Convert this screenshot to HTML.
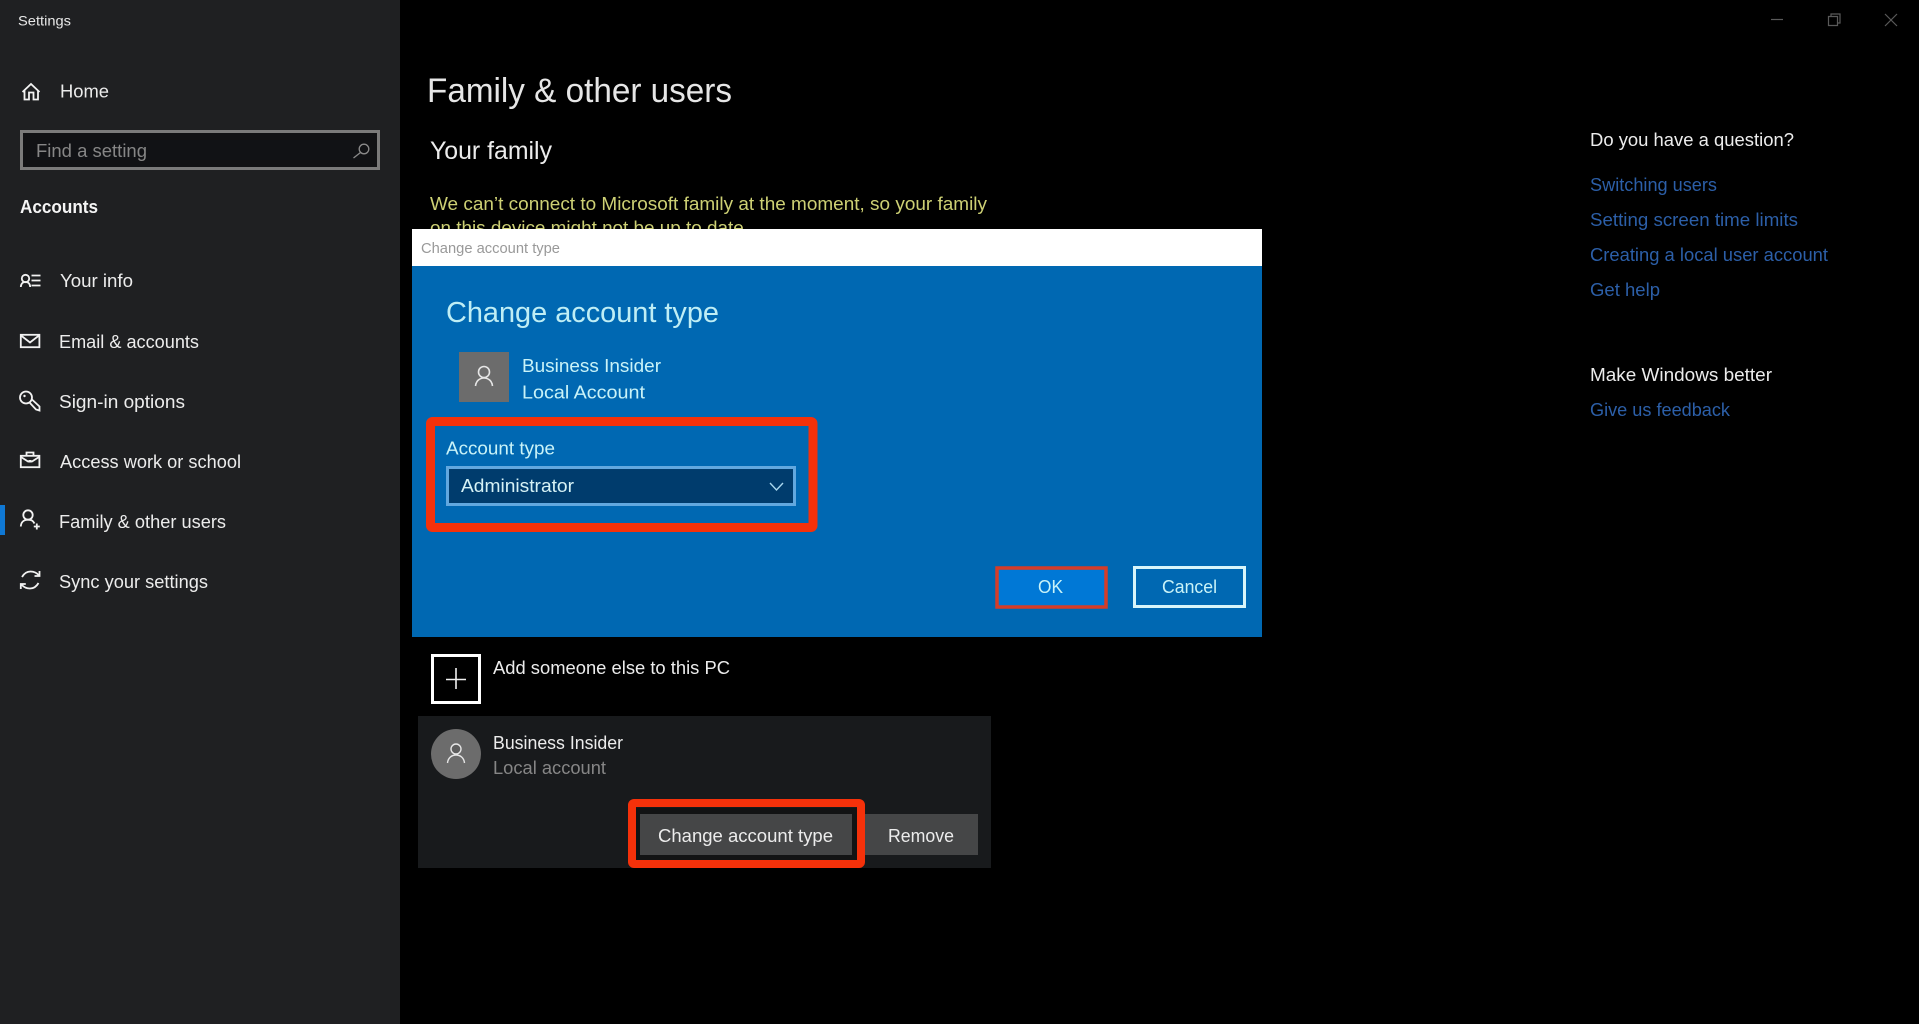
<!DOCTYPE html>
<html lang="en"><head><meta charset="utf-8"><title>Settings</title>
<style>
html,body{margin:0;padding:0;background:#000;width:1919px;height:1024px;overflow:hidden}
svg{display:block}
text{font-family:"Liberation Sans",sans-serif;white-space:pre}
.s{fill:none;stroke:#f2f2f2;stroke-width:1.8}
</style></head><body>
<svg xmlns="http://www.w3.org/2000/svg" width="1919" height="1024" viewBox="0 0 1919 1024">
<rect width="1919" height="1024" fill="#000"/>
<rect width="400" height="1024" fill="#1f2022"/>
<text x="18" y="25.500" font-size="14" fill="#e8e8e8" textLength="53" lengthAdjust="spacingAndGlyphs">Settings</text>

<!-- home -->
<path class="s" d="M22.500 92L31 84L39.500 92M24.500 90.500V99.500H29V92.500H33.500V99.500H38V90.500"/>
<text x="60" y="97.500" font-size="18.500" fill="#ececec" textLength="49" lengthAdjust="spacingAndGlyphs">Home</text>

<!-- search -->
<rect x="21.500" y="131.500" width="357" height="37" fill="#111215" stroke="#7b7b7b" stroke-width="3"/>
<text x="36" y="157" font-size="18.500" fill="#868686" textLength="111" lengthAdjust="spacingAndGlyphs">Find a setting</text>
<circle cx="364" cy="149" r="4.800" fill="none" stroke="#8a8a8a" stroke-width="1.300"/>
<path d="M360.500 152.500L353.500 158" fill="none" stroke="#8a8a8a" stroke-width="1.300"/>

<text x="20" y="213" font-size="18.500" font-weight="bold" fill="#f5f5f5" textLength="78" lengthAdjust="spacingAndGlyphs">Accounts</text>

<!-- your info -->
<circle cx="25.500" cy="278.500" r="3.700" class="s"/>
<path class="s" d="M20.800 287C21 283.500 23 282 25.500 282S30 283.500 30.200 287M31.500 275.500H40.500M31.500 280.500H40.500M31.500 285.500H40.500"/>
<text x="60" y="287" font-size="18.500" fill="#ececec" textLength="73" lengthAdjust="spacingAndGlyphs">Your info</text>

<!-- mail -->
<rect x="20.800" y="334.800" width="18.600" height="12.400" class="s"/>
<path class="s" d="M21 335.500L30 342.500L39 335.500"/>
<text x="59" y="348" font-size="18.500" fill="#ececec" textLength="140" lengthAdjust="spacingAndGlyphs">Email &amp; accounts</text>

<!-- key -->
<circle cx="26" cy="397.500" r="6" class="s"/>
<circle cx="24.500" cy="396" r="1.200" fill="#f2f2f2"/>
<path class="s" d="M29.500 402.500L36 409.500L39.500 410.500L39.500 406.500L32 399.500"/>
<text x="59" y="408" font-size="18.500" fill="#ececec" textLength="126" lengthAdjust="spacingAndGlyphs">Sign-in options</text>

<!-- briefcase -->
<rect x="20.800" y="455.800" width="18.600" height="11.400" class="s"/>
<path class="s" d="M26.500 455.500V452.500H33.500V455.500M21 457L28 461.500H32L39 457"/>
<rect x="28.500" y="460" width="3" height="2.500" fill="#f2f2f2"/>
<text x="60" y="468" font-size="18.500" fill="#ececec" textLength="181" lengthAdjust="spacingAndGlyphs">Access work or school</text>

<!-- family -->
<rect x="0" y="505" width="5" height="30" fill="#0f78d4"/>
<circle cx="28" cy="515" r="4.700" class="s"/>
<path class="s" d="M20.800 526.500C21 522 24 519.700 28 519.700S33 521 34.500 523.500M36.800 523.500V529.500M33.800 526.500H39.800"/>
<text x="59" y="528" font-size="18.500" fill="#ececec" textLength="167" lengthAdjust="spacingAndGlyphs">Family &amp; other users</text>

<!-- sync -->
<path class="s" d="M22 577C24 573.500 27 571.500 30.500 571.500C34 571.500 37 573 39 575.500M39.500 571V576H34.500"/>
<path class="s" d="M38.500 583C36.500 586.500 33.500 588.500 30 588.500C26.500 588.500 23.500 587 21.500 584.500M20.800 589V584H25.800"/>
<text x="59" y="588" font-size="18.500" fill="#ececec" textLength="149" lengthAdjust="spacingAndGlyphs">Sync your settings</text>

<!-- main -->
<text x="427" y="102" font-size="34" fill="#e6e6e6" textLength="305" lengthAdjust="spacingAndGlyphs">Family &amp; other users</text>
<text x="430" y="159" font-size="25" fill="#ececec" textLength="122" lengthAdjust="spacingAndGlyphs">Your family</text>
<text x="430" y="210" font-size="18.500" fill="#cdd074" textLength="557" lengthAdjust="spacingAndGlyphs">We can’t connect to Microsoft family at the moment, so your family</text>
<text x="430" y="234" font-size="18.500" fill="#cdd074" textLength="319" lengthAdjust="spacingAndGlyphs">on this device might not be up to date.</text>

<!-- dialog -->
<rect x="412" y="229" width="850" height="408" fill="#0068b2"/>
<rect x="412" y="229" width="850" height="37" fill="#fff"/>
<text x="421" y="253" font-size="15" fill="#999" textLength="139" lengthAdjust="spacingAndGlyphs">Change account type</text>
<text x="446" y="322" font-size="29" fill="#bfeef5" textLength="273" lengthAdjust="spacingAndGlyphs">Change account type</text>
<rect x="459" y="352" width="50" height="50" fill="#6c6c6c"/>
<circle cx="484" cy="372" r="5.500" fill="none" stroke="#e6e6e6" stroke-width="1.600"/>
<path d="M475.500 386C476 381 479.500 378 484 378S492 381 492.500 386" fill="none" stroke="#e6e6e6" stroke-width="1.600"/>
<text x="522" y="372" font-size="18.500" fill="#c9f3f8" textLength="139" lengthAdjust="spacingAndGlyphs">Business Insider</text>
<text x="522" y="398.500" font-size="18.500" fill="#c9f3f8" textLength="123" lengthAdjust="spacingAndGlyphs">Local Account</text>

<rect x="430.500" y="421.500" width="382.500" height="106" rx="2" fill="none" stroke="#f5310a" stroke-width="9"/>
<text x="446" y="454.500" font-size="18.500" fill="#c9f3f8" textLength="109" lengthAdjust="spacingAndGlyphs">Account type</text>
<rect x="447.500" y="467.500" width="347" height="37" fill="#003c6d" stroke="#62a8df" stroke-width="3"/>
<text x="461" y="492" font-size="18.500" fill="#d6f2f6" textLength="113" lengthAdjust="spacingAndGlyphs">Administrator</text>
<path d="M770 483L776.500 490L783 483" fill="none" stroke="#a9d7ee" stroke-width="1.400"/>

<rect x="997" y="568" width="109" height="39" fill="#0078d6" stroke="#d63c28" stroke-width="3.500"/>
<text x="1038" y="593" font-size="18.500" fill="#c9f3f8" textLength="25" lengthAdjust="spacingAndGlyphs">OK</text>
<rect x="1134.500" y="567.500" width="110" height="39" fill="#0068b2" stroke="#d8f5fa" stroke-width="3"/>
<text x="1162" y="593" font-size="18.500" fill="#c9f3f8" textLength="55" lengthAdjust="spacingAndGlyphs">Cancel</text>

<!-- add -->
<rect x="432.500" y="655.500" width="47" height="47" fill="none" stroke="#fff" stroke-width="3"/>
<path d="M456 668V689M446 679.500H466" stroke="#f0f0f0" stroke-width="1.600" fill="none"/>
<text x="493" y="674" font-size="18.500" fill="#ececec" textLength="237" lengthAdjust="spacingAndGlyphs">Add someone else to this PC</text>

<!-- card -->
<rect x="418" y="716" width="573" height="152" fill="#181a1c"/>
<circle cx="456" cy="754" r="25" fill="#6c6c6c"/>
<circle cx="456" cy="749" r="5" fill="#5e5e5e" stroke="#e6e6e6" stroke-width="1.400"/>
<path d="M447.500 763C448 758 451.500 755 456 755S464 758 464.500 763" fill="none" stroke="#e6e6e6" stroke-width="1.400"/>
<text x="493" y="749" font-size="18.500" fill="#ececec" textLength="130" lengthAdjust="spacingAndGlyphs">Business Insider</text>
<text x="493" y="774" font-size="18.500" fill="#868686" textLength="113" lengthAdjust="spacingAndGlyphs">Local account</text>
<rect x="636" y="808" width="221" height="52" fill="#121314"/>
<rect x="640" y="814" width="212" height="41" fill="#454647"/>
<rect x="865" y="814" width="113" height="41" fill="#454647"/>
<rect x="632" y="803" width="229" height="61" rx="2" fill="none" stroke="#f5310a" stroke-width="8"/>
<text x="658" y="842" font-size="18.500" fill="#ececec" textLength="175" lengthAdjust="spacingAndGlyphs">Change account type</text>
<text x="888" y="842" font-size="18.500" fill="#ececec" textLength="66" lengthAdjust="spacingAndGlyphs">Remove</text>

<!-- window controls -->
<path d="M1771 19.500H1783" stroke="#5a5a5a" stroke-width="1.200" fill="none"/>
<path d="M1828.500 16.500H1837.500V25.500H1828.500ZM1831 16.500V14H1840V23H1837.500" stroke="#5a5a5a" stroke-width="1.200" fill="none"/>
<path d="M1885 14L1897 26M1897 14L1885 26" stroke="#5a5a5a" stroke-width="1.200" fill="none"/>

<!-- right column -->
<text x="1590" y="146" font-size="18.500" fill="#ececec" textLength="204" lengthAdjust="spacingAndGlyphs">Do you have a question?</text>
<text x="1590" y="191" font-size="18.500" fill="#2c5fa8" textLength="127" lengthAdjust="spacingAndGlyphs">Switching users</text>
<text x="1590" y="226" font-size="18.500" fill="#2c5fa8" textLength="208" lengthAdjust="spacingAndGlyphs">Setting screen time limits</text>
<text x="1590" y="261" font-size="18.500" fill="#2c5fa8" textLength="238" lengthAdjust="spacingAndGlyphs">Creating a local user account</text>
<text x="1590" y="296" font-size="18.500" fill="#2c5fa8" textLength="70" lengthAdjust="spacingAndGlyphs">Get help</text>
<text x="1590" y="381" font-size="18.500" fill="#ececec" textLength="182" lengthAdjust="spacingAndGlyphs">Make Windows better</text>
<text x="1590" y="416" font-size="18.500" fill="#2c5fa8" textLength="140" lengthAdjust="spacingAndGlyphs">Give us feedback</text>
</svg>
</body></html>
